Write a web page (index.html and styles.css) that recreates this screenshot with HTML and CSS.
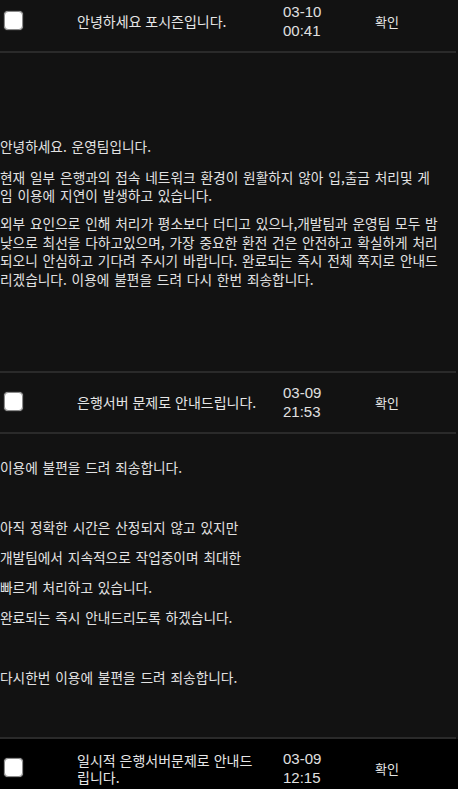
FILE: index.html
```html
<!DOCTYPE html>
<html lang="ko">
<head>
<meta charset="utf-8">
<link rel="stylesheet" href="styles.css">
</head>
<body>
<div class="list">
  <div class="row">
    <div class="cell-check"><span class="checkbox"></span></div>
    <div class="cell-title">안녕하세요 포시즌입니다.</div>
    <div class="cell-date"><span class="date-line">03-10</span><span class="date-line">00:41</span></div>
    <div class="cell-status">확인</div>
  </div>
  <div class="content content-first">
    <p class="para para-gap-lg">안녕하세요. 운영팀입니다.</p>
    <p class="para">현재 일부 은행과의 접속 네트워크 환경이 원활하지 않아 입,출금 처리및 게임 이용에 지연이 발생하고 있습니다.</p>
    <p class="para">외부 요인으로 인해 처리가 평소보다 더디고 있으나,개발팀과 운영팀 모두 밤낮으로 최선을 다하고있으며, 가장 중요한 환전 건은 안전하고 확실하게 처리되오니 안심하고 기다려 주시기 바랍니다. 완료되는 즉시 전체 쪽지로 안내드리겠습니다. 이용에 불편을 드려 다시 한번 죄송합니다.</p>
  </div>
  <div class="row">
    <div class="cell-check"><span class="checkbox"></span></div>
    <div class="cell-title">은행서버 문제로 안내드립니다.</div>
    <div class="cell-date"><span class="date-line">03-09</span><span class="date-line">21:53</span></div>
    <div class="cell-status">확인</div>
  </div>
  <div class="content content-second">
    <p class="line">이용에 불편을 드려 죄송합니다.</p>
    <p class="line">&nbsp;</p>
    <p class="line">아직 정확한 시간은 산정되지 않고 있지만</p>
    <p class="line">개발팀에서 지속적으로 작업중이며 최대한</p>
    <p class="line">빠르게 처리하고 있습니다.</p>
    <p class="line">완료되는 즉시 안내드리도록 하겠습니다.</p>
    <p class="line">&nbsp;</p>
    <p class="line">다시한번 이용에 불편을 드려 죄송합니다.</p>
  </div>
  <div class="row row-dark">
    <div class="cell-check"><span class="checkbox"></span></div>
    <div class="cell-title">일시적 은행서버문제로 안내드립니다.</div>
    <div class="cell-date"><span class="date-line">03-09</span><span class="date-line">12:15</span></div>
    <div class="cell-status">확인</div>
  </div>
</div>
</body>
</html>
```
FILE: styles.css
```css
html, body {
  margin: 0;
  padding: 0;
  background: #121212;
  overflow: hidden;
}
body {
  font-family: "Noto Sans CJK KR", "Noto Sans", sans-serif;
  color: #e4e4e4;
}
.list {
  margin-top: -8px;
}
.row {
  display: grid;
  grid-template-columns: 77px 206px 92px 1fr;
  align-items: center;
  height: 59px;
  border-bottom: 2px solid #2a2a2a;
  margin-right: 2px;
}
.row-dark {
  background: #000;
  margin-right: 0;
}
.cell-check {
  padding-left: 4px;
  display: flex;
  align-items: center;
  margin-bottom: 2px;
}
.checkbox {
  display: block;
  width: 17px;
  height: 17px;
  background: #fff;
  border: 1px solid #8a8a8a;
  border-radius: 4px;
  box-shadow: 0 0 1px #bbb;
}
.cell-title {
  font-size: 14px;
  line-height: 16.5px;
  padding-right: 20px;
  color: #e6e6e6;
}
.cell-date {
  display: flex;
  flex-direction: column;
  font-family: "Liberation Sans", Arial, sans-serif;
  font-size: 15px;
  line-height: 18.5px;
  color: #e0e0e0;
}
.date-line {
  display: block;
}
.cell-status {
  font-size: 13px;
  color: #e6e6e6;
}
.content {
  border-bottom: 2px solid #2a2a2a;
  margin-right: 2px;
  font-size: 13.7px;
  word-spacing: 1px;
  color: #e2e2e2;
}
.content-first {
  padding: 84px 16px 83px 0;
}
.para {
  margin: 0 0 9.5px;
  line-height: 18.5px;
}
.para-gap-lg {
  margin-bottom: 12px;
}
.para:last-child {
  margin-bottom: 0;
}
.content-second {
  padding: 18px 0 45px 0;
}
.line {
  margin: 0;
  line-height: 30px;
}
```
